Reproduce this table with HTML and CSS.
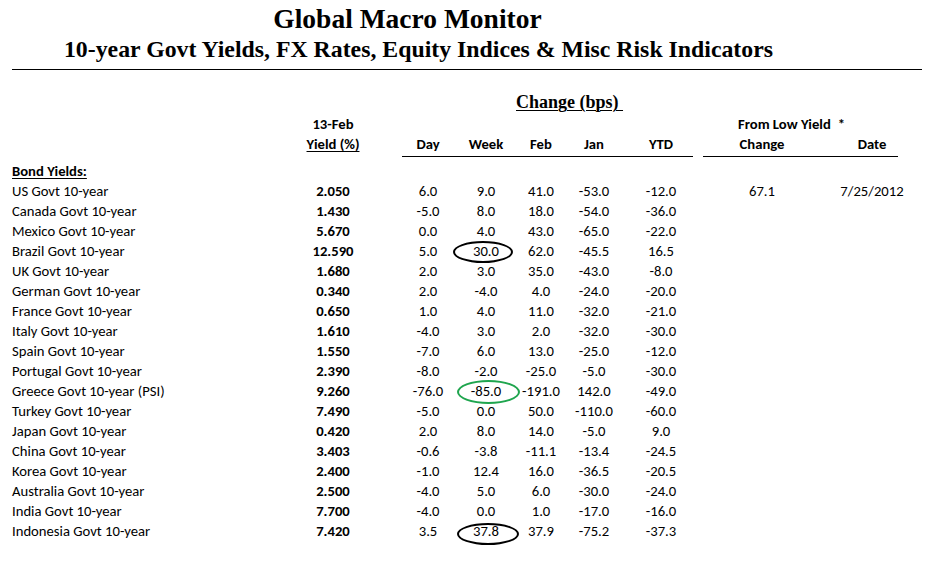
FILE: index.html
```html
<!DOCTYPE html>
<html lang="en">
<head>
<meta charset="utf-8">
<title>Global Macro Monitor</title>
<link rel="stylesheet" href="styles.css">
</head>
<body>
<div class="page">
  <header class="titles">
    <h1 class="title">Global Macro Monitor</h1>
    <h2 class="subtitle">10-year Govt Yields, FX Rates, Equity Indices &amp; Misc Risk Indicators</h2>
  </header>
  <div class="rule"></div>

  <div class="sheet">
    <div class="row row-change">
      <div class="change-title"><span class="u">Change (bps)&nbsp;</span></div>
    </div>
    <div class="row head">
      <div class="c-label"></div>
      <div class="c-yield">13-Feb</div>
      <div class="from-low">From Low Yield<span class="star">*</span></div>
    </div>
    <div class="row head">
      <div class="c-label"></div>
      <div class="c-yield"><span class="u">Yield (%)</span></div>
      <div class="c-sp"></div>
      <div>Day</div><div>Week</div><div>Feb</div><div>Jan</div><div>YTD</div>
      <div class="c-sp"></div>
      <div>Change</div><div>Date</div>
    </div>
    <div class="row rules">
      <div class="line-chg"></div>
      <div class="line-low"></div>
    </div>
    <div class="row section">
      <div class="c-label"><span class="u">Bond Yields:</span></div>
    </div>

    <div class="row"><div class="c-label">US Govt 10-year</div><div class="c-yield">2.050</div><div class="c-sp"></div><div>6.0</div><div>9.0</div><div>41.0</div><div>-53.0</div><div>-12.0</div><div class="c-sp"></div><div>67.1</div><div>7/25/2012</div></div>
    <div class="row"><div class="c-label">Canada Govt 10-year</div><div class="c-yield">1.430</div><div class="c-sp"></div><div>-5.0</div><div>8.0</div><div>18.0</div><div>-54.0</div><div>-36.0</div></div>
    <div class="row"><div class="c-label">Mexico Govt 10-year</div><div class="c-yield">5.670</div><div class="c-sp"></div><div>0.0</div><div>4.0</div><div>43.0</div><div>-65.0</div><div>-22.0</div></div>
    <div class="row"><div class="c-label">Brazil Govt 10-year</div><div class="c-yield">12.590</div><div class="c-sp"></div><div>5.0</div><div class="marked">30.0<span class="ring ring-a"></span></div><div>62.0</div><div>-45.5</div><div>16.5</div></div>
    <div class="row"><div class="c-label">UK Govt 10-year</div><div class="c-yield">1.680</div><div class="c-sp"></div><div>2.0</div><div>3.0</div><div>35.0</div><div>-43.0</div><div>-8.0</div></div>
    <div class="row"><div class="c-label">German Govt 10-year</div><div class="c-yield">0.340</div><div class="c-sp"></div><div>2.0</div><div>-4.0</div><div>4.0</div><div>-24.0</div><div>-20.0</div></div>
    <div class="row"><div class="c-label">France Govt 10-year</div><div class="c-yield">0.650</div><div class="c-sp"></div><div>1.0</div><div>4.0</div><div>11.0</div><div>-32.0</div><div>-21.0</div></div>
    <div class="row"><div class="c-label">Italy Govt 10-year</div><div class="c-yield">1.610</div><div class="c-sp"></div><div>-4.0</div><div>3.0</div><div>2.0</div><div>-32.0</div><div>-30.0</div></div>
    <div class="row"><div class="c-label">Spain Govt 10-year</div><div class="c-yield">1.550</div><div class="c-sp"></div><div>-7.0</div><div>6.0</div><div>13.0</div><div>-25.0</div><div>-12.0</div></div>
    <div class="row"><div class="c-label">Portugal Govt 10-year</div><div class="c-yield">2.390</div><div class="c-sp"></div><div>-8.0</div><div>-2.0</div><div>-25.0</div><div>-5.0</div><div>-30.0</div></div>
    <div class="row"><div class="c-label">Greece Govt 10-year (PSI)</div><div class="c-yield">9.260</div><div class="c-sp"></div><div>-76.0</div><div class="marked">-85.0<span class="ring ring-b"></span></div><div>-191.0</div><div>142.0</div><div>-49.0</div></div>
    <div class="row"><div class="c-label">Turkey Govt 10-year</div><div class="c-yield">7.490</div><div class="c-sp"></div><div>-5.0</div><div>0.0</div><div>50.0</div><div>-110.0</div><div>-60.0</div></div>
    <div class="row"><div class="c-label">Japan Govt 10-year</div><div class="c-yield">0.420</div><div class="c-sp"></div><div>2.0</div><div>8.0</div><div>14.0</div><div>-5.0</div><div>9.0</div></div>
    <div class="row"><div class="c-label">China Govt 10-year</div><div class="c-yield">3.403</div><div class="c-sp"></div><div>-0.6</div><div>-3.8</div><div>-11.1</div><div>-13.4</div><div>-24.5</div></div>
    <div class="row"><div class="c-label">Korea Govt 10-year</div><div class="c-yield">2.400</div><div class="c-sp"></div><div>-1.0</div><div>12.4</div><div>16.0</div><div>-36.5</div><div>-20.5</div></div>
    <div class="row"><div class="c-label">Australia Govt 10-year</div><div class="c-yield">2.500</div><div class="c-sp"></div><div>-4.0</div><div>5.0</div><div>6.0</div><div>-30.0</div><div>-24.0</div></div>
    <div class="row"><div class="c-label">India Govt 10-year</div><div class="c-yield">7.700</div><div class="c-sp"></div><div>-4.0</div><div>0.0</div><div>1.0</div><div>-17.0</div><div>-16.0</div></div>
    <div class="row"><div class="c-label">Indonesia Govt 10-year</div><div class="c-yield">7.420</div><div class="c-sp"></div><div>3.5</div><div class="marked">37.8<span class="ring ring-c"></span></div><div>37.9</div><div>-75.2</div><div>-37.3</div></div>
  </div>
</div>
</body>
</html>
```

FILE: styles.css
```css
html, body {
  margin: 0;
  padding: 0;
  background: #ffffff;
}

.page {
  width: 935px;
  height: 561px;
  overflow: hidden;
  color: #000000;
  font-family: "Carlito", "Lato", "Liberation Sans", sans-serif;
  font-size: 14.67px;
}

.titles {
  text-align: center;
  font-family: "Liberation Serif", "Times New Roman", serif;
  font-weight: bold;
}

.title {
  margin: 4px 0 0 0;
  padding-right: 120px;
  font-size: 27.5px;
  line-height: 30px;
  font-weight: bold;
}

.subtitle {
  margin: 2px 0 0 0;
  padding-right: 98px;
  font-size: 23.8px;
  line-height: 27px;
  font-weight: bold;
}

.rule {
  margin: 6px 13px 0 12px;
  height: 1px;
  background: #000000;
}

.sheet {
  padding-left: 12px;
}

.row {
  display: grid;
  grid-template-columns: 288px 66px 34px 56px 60px 50px 56px 78px 3px 118px 102px;
  height: 20px;
  line-height: 20px;
  text-align: center;
  white-space: nowrap;
}

.row > .c-label {
  text-align: left;
}

.c-yield {
  font-weight: bold;
}

.u {
  text-decoration: underline;
  text-underline-offset: 2px;
}

.row-change {
  margin-top: 21px;
  height: 22px;
  line-height: 22px;
}

.change-title {
  grid-column: 4 / 9;
  text-align: left;
  padding-left: 116px;
  font-family: "Liberation Serif", "Times New Roman", serif;
  font-weight: bold;
  font-size: 18px;
}

.change-title .u {
  text-underline-offset: 2px;
  text-decoration-thickness: 1px;
}

.head {
  font-weight: bold;
}

.head:nth-of-type(2) {
  margin-top: 1px;
}

.from-low {
  grid-column: 10 / 12;
  text-align: left;
  padding-left: 35px;
}

.star {
  margin-left: 7px;
}

.rules {
  height: 1px;
  margin-top: 2px;
}

.line-chg {
  grid-column: 4 / 9;
  margin: 0 7px 0 2px;
  background: #000000;
}

.line-low {
  grid-column: 10 / 12;
  margin: 0 25px 0 0;
  background: #000000;
}

.section {
  margin-top: 4px;
  font-weight: bold;
}

.marked {
  position: relative;
}

.ring {
  position: absolute;
  box-sizing: border-box;
  border: 2px solid #000000;
  border-radius: 50%;
}

.ring-a {
  left: -3px;
  top: 0;
  width: 60px;
  height: 22px;
}

.ring-b {
  left: 1px;
  top: -1px;
  width: 63px;
  height: 24px;
  border-color: #1fa54e;
}

.ring-c {
  left: 1px;
  top: 2px;
  width: 62px;
  height: 22px;
}
```
